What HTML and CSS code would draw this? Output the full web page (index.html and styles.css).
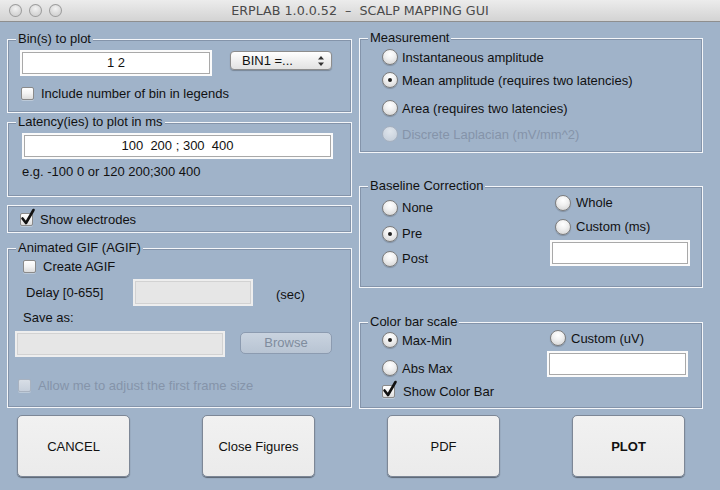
FILE: index.html
```html
<!DOCTYPE html>
<html>
<head>
<meta charset="utf-8">
<link rel="stylesheet" href="styles.css">
</head>
<body>
<div class="window">
  <div class="titlebar">
    <div class="lights"><span class="light"></span><span class="light"></span><span class="light"></span></div>
    <div class="title">ERPLAB 1.0.0.52 &nbsp;– &nbsp;SCALP MAPPING GUI</div>
    <div></div>
  </div>

  <div class="content">
    <div class="col col-left">
      <section class="panel p-bin">
        <div class="legend">Bin(s) to plot</div>
        <div class="bin-row">
          <div class="field f-bin">1 2</div>
          <div class="popup"><span class="popup-text">BIN1 =...</span>
            <svg class="popup-arrows" width="8" height="12" viewBox="0 0 8 12"><path d="M4 1 L7 4.5 L1 4.5 Z M4 11 L7 7.5 L1 7.5 Z" fill="#333"/></svg>
          </div>
        </div>
        <div class="check-row cr-legend"><span class="check"></span><span>Include number of bin in legends</span></div>
      </section>

      <section class="panel p-lat">
        <div class="legend">Latency(ies) to plot in ms</div>
        <div class="field f-lat">100&nbsp; 200 ; 300&nbsp; 400</div>
        <div class="hint">e.g. -100 0 or 120 200;300 400</div>
      </section>

      <section class="panel p-elec">
        <div class="check-row"><span class="check checked"><svg class="tick" width="16" height="18" viewBox="0 0 16 18"><path d="M2.5 10.5 L6 15 L13.5 2" fill="none" stroke="#111" stroke-width="2.6" stroke-linecap="round" stroke-linejoin="round"/></svg></span><span>Show electrodes</span></div>
      </section>

      <section class="panel p-gif">
        <div class="legend">Animated GIF (AGIF)</div>
        <div class="check-row cr-agif"><span class="check"></span><span>Create AGIF</span></div>
        <div class="delay-row">
          <span class="delay-label">Delay [0-655]</span>
          <div class="field disabled f-delay"></div>
          <span class="sec">(sec)</span>
        </div>
        <div class="save-label">Save as:</div>
        <div class="save-row">
          <div class="field disabled f-save"></div>
          <div class="browse">Browse</div>
        </div>
        <div class="check-row cr-allow dim"><span class="check off"></span><span>Allow me to adjust the first frame size</span></div>
      </section>
    </div>

    <div class="col col-right">
      <section class="panel p-meas">
        <div class="legend">Measurement</div>
        <div class="radio-row r1"><span class="radio"></span><span>Instantaneous amplitude</span></div>
        <div class="radio-row r2"><span class="radio on"></span><span>Mean amplitude (requires two latencies)</span></div>
        <div class="radio-row r3"><span class="radio"></span><span>Area (requires two latencies)</span></div>
        <div class="radio-row r4 dim"><span class="radio off"></span><span>Discrete Laplacian (mV/mm^2)</span></div>
      </section>

      <section class="panel p-base">
        <div class="legend">Baseline Correction</div>
        <div class="split split-base">
          <div class="sub-left">
            <div class="radio-row b1"><span class="radio"></span><span>None</span></div>
            <div class="radio-row b2"><span class="radio on"></span><span>Pre</span></div>
            <div class="radio-row b3"><span class="radio"></span><span>Post</span></div>
          </div>
          <div class="sub-right">
            <div class="radio-row w1"><span class="radio"></span><span>Whole</span></div>
            <div class="radio-row w2"><span class="radio"></span><span>Custom (ms)</span></div>
            <div class="field f-custom"></div>
          </div>
        </div>
      </section>

      <section class="panel p-color">
        <div class="legend">Color bar scale</div>
        <div class="split split-color">
          <div class="sub-left">
            <div class="radio-row c1"><span class="radio on"></span><span>Max-Min</span></div>
            <div class="radio-row c2"><span class="radio"></span><span>Abs Max</span></div>
            <div class="check-row c3"><span class="check checked"><svg class="tick" width="16" height="18" viewBox="0 0 16 18"><path d="M2.5 10.5 L6 15 L13.5 2" fill="none" stroke="#111" stroke-width="2.6" stroke-linecap="round" stroke-linejoin="round"/></svg></span><span>Show Color Bar</span></div>
          </div>
          <div class="sub-right">
            <div class="radio-row u1"><span class="radio"></span><span>Custom (uV)</span></div>
            <div class="field f-uv"></div>
          </div>
        </div>
      </section>
    </div>
  </div>

  <div class="buttons">
    <div class="btn">CANCEL</div>
    <div class="btn">Close Figures</div>
    <div class="btn">PDF</div>
    <div class="btn bold">PLOT</div>
  </div>
</div>
</body>
</html>
```

FILE: styles.css
```css
* { box-sizing: border-box; }
html, body { margin: 0; padding: 0; }
body {
  width: 720px;
  height: 490px;
  overflow: hidden;
  background: #a0b3c9;
  font-family: "Liberation Sans", Arial, sans-serif;
  font-size: 13px;
  color: #111;
}
.window { width: 720px; height: 490px; background: #a0b3c9; }

.titlebar {
  height: 22px;
  display: grid;
  grid-template-columns: 1fr auto 1fr;
  align-items: center;
  background: linear-gradient(#ececec, #d3d3d3);
  border-bottom: 1px solid #8e8e8e;
}
.lights { display: flex; gap: 7px; padding-left: 9px; }
.light {
  width: 13px; height: 13px; border-radius: 50%;
  background: radial-gradient(circle at 50% 35%, #f2f2f2 0%, #dcdcdc 45%, #c4c4c4 100%);
  box-shadow: inset 0 0 0 1px #9c9c9c;
}
.title {
  font-family: "DejaVu Sans", sans-serif;
  font-size: 12.7px;
  color: #4a4a4a;
  white-space: nowrap;
}

.content {
  height: 387px;
  display: flex;
  gap: 7px;
  padding-left: 7px;
}
.col { display: flex; flex-direction: column; }
.col-left { width: 345px; }
.col-right { width: 344px; }

.panel {
  border: 1px solid #f4f6f9;
  box-shadow: inset 0 0 0 1px #8494aa;
  display: flex;
  flex-direction: column;
}
.legend {
  margin: -9px 0 0 8px;
  padding: 0 2px;
  width: fit-content;
  height: 16px;
  line-height: 16px;
  background: #a0b3c9;
}

.p-bin { height: 74px; margin-top: 17px; }
.p-lat { height: 75px; margin-top: 9px; }
.p-elec { height: 28px; margin-top: 8px; justify-content: center; padding-left: 12px; }
.p-gif { height: 160px; margin-top: 15px; }
.p-meas { height: 115px; margin-top: 16px; }
.p-base { height: 103px; margin-top: 33px; }
.p-color { height: 87px; margin-top: 34px; }

/* fields */
.field {
  background: #fff;
  border: 2px solid #fbfbfb;
  box-shadow: inset 0 0 0 1px #a9a9a9;
  height: 26px;
  line-height: 22px;
  text-align: center;
}
.field.disabled {
  background: #e6e6e6;
  border-color: #eeeeee;
  box-shadow: inset 0 0 0 1px #d2d2d2;
}

.bin-row { display: flex; align-items: flex-start; margin-top: 3px; padding-left: 12px; }
.f-bin { width: 192px; }
.popup {
  margin-left: 18px;
  margin-top: 1px;
  width: 102px;
  height: 19px;
  border-radius: 4px;
  border: 1px solid #8d8d8d;
  background: linear-gradient(#ffffff, #f0f0f0 50%, #e2e2e2);
  box-shadow: 0 1px 1px rgba(0,0,0,0.25);
  display: flex;
  align-items: center;
  padding-left: 11px;
  padding-right: 6px;
}
.popup-text { flex: 1; }
.popup-arrows { display: block; }

.check-row { display: flex; align-items: center; gap: 7px; height: 16px; }
.check {
  width: 13px; height: 13px;
  border-radius: 2px;
  border: 1px solid #8a8a8a;
  background: linear-gradient(#ffffff, #f3f3f3 50%, #dcdcdc);
  box-shadow: 0 1px 0 rgba(255,255,255,0.3);
  position: relative;
  flex: none;
}
.check.off { border-color: #a8b2c0; background: linear-gradient(#d8dee6, #c6cfdb); }
.tick { position: absolute; left: -1px; top: -6px; }
.cr-legend { margin-top: 10px; padding-left: 13px; height: 14px; }

.f-lat { width: 311px; margin-top: 3px; margin-left: 14px; }
.hint { margin-top: 5px; margin-left: 14px; line-height: 16px; }

.cr-agif { margin-top: 2px; padding-left: 15px; }
.delay-row { display: flex; align-items: center; margin-top: 5px; height: 27px; }
.delay-label { width: 125px; padding-left: 18px; }
.f-delay { width: 120px; height: 27px; }
.sec { margin-left: 23px; padding-top: 4px; }
.save-label { margin-top: 4px; padding-left: 15px; line-height: 16px; }
.save-row { display: flex; align-items: flex-start; margin-top: 5px; padding-left: 7px; }
.f-save { width: 210px; }
.browse {
  margin-left: 15px;
  margin-top: 1px;
  width: 92px;
  height: 22px;
  line-height: 20px;
  text-align: center;
  border-radius: 5px;
  border: 1px solid #8c9bb0;
  background: linear-gradient(#c9d3df, #b8c4d3);
  color: #7f8c9d;
}
.cr-allow { margin-top: 20px; padding-left: 10px; }
.dim { color: #8594a9; }

/* radios */
.radio-row { display: flex; align-items: center; gap: 4px; height: 18px; }
.radio {
  width: 16px; height: 16px; border-radius: 50%;
  flex: none;
  border: 1px solid #7d7d7d;
  background: radial-gradient(circle at 50% 30%, #ffffff 0%, #f1f1f1 40%, #cfcfcf 100%);
  box-shadow: 0 1px 1px rgba(0,0,0,0.2);
  display: flex; align-items: center; justify-content: center;
}
.radio.on::after {
  content: "";
  width: 4px; height: 4px; border-radius: 50%;
  background: #222;
}
.radio.off { border-color: #a6b1c0; background: radial-gradient(circle at 50% 30%, #dfe5ec, #c2ccd8); box-shadow: none; }

.p-meas .radio-row { padding-left: 22px; }
.r1 { margin-top: 2px; }
.r2 { margin-top: 5px; }
.r3 { margin-top: 10px; }
.r4 { margin-top: 8px; }

.split { display: grid; }
.split-base { grid-template-columns: 190px 1fr; }
.split-color { grid-template-columns: 187px 1fr; }
.sub-left, .sub-right { display: flex; flex-direction: column; }
.sub-left .radio-row, .sub-left .check-row { padding-left: 22px; }

.b1 { margin-top: 5px; }
.b2 { margin-top: 8px; }
.b3 { margin-top: 7px; }
.w1 { margin-top: 0; padding-left: 5px; gap: 5px; }
.w2 { margin-top: 6px; padding-left: 5px; gap: 5px; }
.f-custom { width: 140px; margin-top: 4px; }

.c1 { margin-top: 1px; }
.c2 { margin-top: 10px; }
.c3 { margin-top: 5px; height: 18px; gap: 8px; }
.u1 { margin-top: 0; padding-left: 3px; gap: 5px; height: 16px; }
.f-uv { width: 141px; margin-top: 5px; }

/* buttons */
.buttons {
  display: flex;
  gap: 72px;
  padding-left: 17px;
  margin-top: 6px;
}
.btn {
  width: 113px;
  height: 62px;
  border-radius: 5px;
  border: 1px solid #7d8796;
  background: linear-gradient(#f1f1f1, #ebebeb);
  box-shadow: 0 1px 1px rgba(0,0,0,0.45);
  display: flex;
  align-items: center;
  justify-content: center;
}
.btn.bold { font-weight: bold; }
```
